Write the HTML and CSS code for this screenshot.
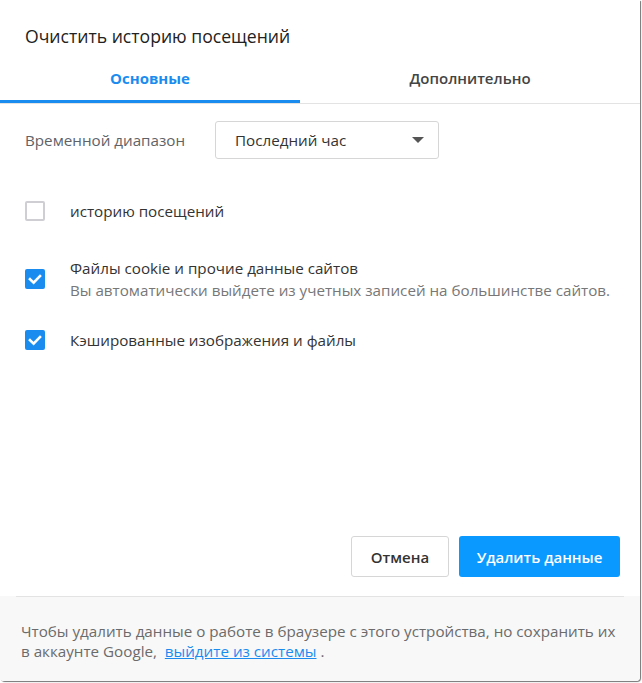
FILE: index.html
```html
<!DOCTYPE html>
<html lang="ru">
<head>
<meta charset="utf-8">
<title>Очистить историю посещений</title>
<link rel="stylesheet" href="styles.css">
</head>
<body>
<div class="dialog">
  <div class="header">Очистить историю посещений</div>
  <div class="tabs">
    <div class="tab tab-active">Основные</div>
    <div class="tab">Дополнительно</div>
  </div>
  <div class="content">
    <div class="range-row">
      <span class="range-label">Временной диапазон</span>
      <div class="select">
        <span>Последний час</span>
        <span class="arrow"></span>
      </div>
    </div>
    <div class="check-row row-first">
      <span class="checkbox"></span>
      <span class="check-label">историю посещений</span>
    </div>
    <div class="check-row row-second">
      <span class="checkbox checked">
        <svg viewBox="0 0 20 20" width="20" height="20"><path d="M5 10.2 L8.6 13.6 L15 7" fill="none" stroke="#fff" stroke-width="2.6" stroke-linecap="square"/></svg>
      </span>
      <div class="check-text">
        <div class="check-label">Файлы cookie и прочие данные сайтов</div>
        <div class="check-sub">Вы автоматически выйдете из учетных записей на большинстве сайтов.</div>
      </div>
    </div>
    <div class="check-row row-third">
      <span class="checkbox checked">
        <svg viewBox="0 0 20 20" width="20" height="20"><path d="M5 10.2 L8.6 13.6 L15 7" fill="none" stroke="#fff" stroke-width="2.6" stroke-linecap="square"/></svg>
      </span>
      <span class="check-label">Кэшированные изображения и файлы</span>
    </div>
  </div>
  <div class="buttons">
    <button class="btn btn-cancel">Отмена</button>
    <button class="btn btn-primary">Удалить данные</button>
  </div>
  <div class="footer">
    <div class="footer-divider"></div>
    <p class="footer-text">Чтобы удалить данные о работе в браузере с этого устройства, но сохранить их в аккаунте Google,&nbsp;&nbsp;<a href="#">выйдите из системы</a>&nbsp;.</p>
  </div>
</div>
</body>
</html>
```

FILE: styles.css
```css
html, body {
  margin: 0;
  padding: 0;
  background: #ffffff;
}
body {
  width: 642px;
  height: 683px;
  overflow: hidden;
  font-family: "Open Sans", "Noto Sans", sans-serif;
  color: #333;
}
.dialog {
  width: 640px;
  height: 681px;
  background: #fff;
  border-radius: 0 0 4px 4px;
  box-shadow: 1px 1px 1px rgba(0,0,0,0.55);
  display: flex;
  flex-direction: column;
  overflow: hidden;
}
.header {
  padding: 24px 25px 0;
  font-size: 17.6px;
  line-height: 24px;
  color: #222;
}
.tabs {
  margin-top: 7px;
  display: grid;
  grid-template-columns: 300px 1fr;
  border-bottom: 1px solid #e3e3e3;
}
.tab {
  height: 48px;
  display: flex;
  align-items: center;
  justify-content: center;
  padding-bottom: 2px;
  box-sizing: border-box;
  font-size: 15px;
  font-weight: 600;
  color: #444;
}
.tab-active {
  color: #1a8cf0;
  box-shadow: inset 0 -3px 0 #1a8cf0;
  font-weight: 700;
}
.content {
  padding: 17px 25px 0;
  flex: 1;
}
.range-row {
  display: flex;
  align-items: center;
}
.range-label {
  width: 190px;
  font-size: 15.2px;
  color: #5f6368;
}
.select {
  width: 224px;
  height: 38px;
  box-sizing: border-box;
  border: 1px solid #d6d6d6;
  border-radius: 3px;
  display: flex;
  align-items: center;
  justify-content: space-between;
  padding: 0 14px 0 19px;
  font-size: 15.2px;
  color: #333;
}
.arrow {
  width: 0;
  height: 0;
  border-left: 6px solid transparent;
  border-right: 6px solid transparent;
  border-top: 6px solid #555;
}
.check-row {
  display: flex;
  align-items: center;
}
.row-first { margin-top: 42px; }
.row-second { margin-top: 36px; }
.row-third { margin-top: 29px; }
.checkbox {
  width: 20px;
  height: 20px;
  box-sizing: border-box;
  border: 2px solid #cfcfd3;
  border-radius: 2px;
  flex: none;
  margin-right: 25px;
  display: flex;
}
.checkbox.checked {
  border: none;
  background: #1a8cf0;
}
.check-label {
  font-size: 15.2px;
  line-height: 20px;
  color: #333;
}
.check-text .check-label { line-height: 22px; }
.check-sub {
  font-size: 15.2px;
  line-height: 22px;
  color: #777;
}
.buttons {
  display: flex;
  justify-content: flex-end;
  gap: 10px;
  padding: 0 20px 19px;
}
.btn {
  height: 41px;
  box-sizing: border-box;
  border-radius: 3px;
  font-family: inherit;
  font-size: 15px;
  font-weight: 600;
  cursor: pointer;
}
.btn-cancel {
  width: 98px;
  background: #fff;
  border: 1px solid #d6d6d6;
  color: #333;
}
.btn-primary {
  width: 161px;
  background: #0a99ff;
  border: none;
  color: #fff;
}
.footer {
  height: 85px;
  box-sizing: border-box;
  background: #f8f8f8;
}
.footer-divider {
  height: 1px;
  margin: 0 16px;
  background: #e3e3e3;
}
.footer-text {
  margin: 0;
  padding: 24px 20px 0 21px;
  font-size: 15.2px;
  line-height: 20px;
  color: #6b6b6b;
}
.footer-text a {
  color: #1a8cf0;
  text-decoration: underline;
}
```
